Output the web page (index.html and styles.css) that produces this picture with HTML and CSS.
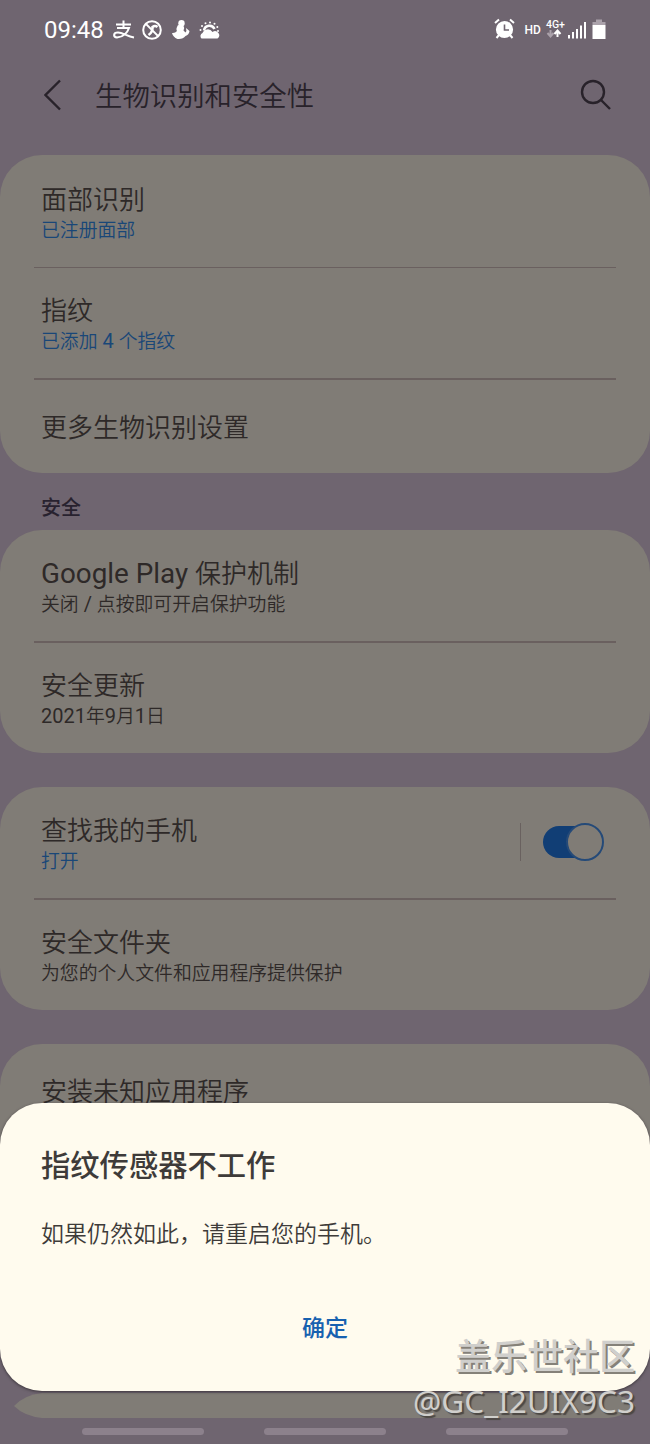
FILE: index.html
```html
<!DOCTYPE html>
<html lang="zh-CN">
<head>
<meta charset="utf-8">
<title>生物识别和安全性</title>
<link rel="stylesheet" href="styles.css">
</head>
<body>
<div class="phone">
  <div class="status">
    <span class="clock">09:48</span>
    <svg class="status-left" width="108" height="22" viewBox="0 0 108 22" fill="none" stroke="#fff" stroke-width="2">
      <path d="M3 5.500H18M10.500 1.500V9M4 9H16C14 15 9 18 4 18.500C0 18 0 13.500 5 13.500C10 13.500 14 17.500 21 18.500"/>
      <circle cx="39" cy="11" r="8.800"/>
      <path d="M33 5L45 17" stroke-width="1.800"/><path d="M35.500 16Q40 13 39.500 8Q42 6 44.500 8" stroke-width="2.600"/>
      <g fill="#fff" stroke="none"><circle cx="68.500" cy="4.300" r="3.200"/><path d="M65 6L70.500 7Q72 9 70.500 11.500L72.500 13.500Q74 12 73 9L76.500 12Q76 16 72.500 17Q70 20.500 64.500 20Q60 18 59 14Q62 14.500 64 12Q62.500 10 65 6Z"/></g>
      <path stroke-width="2.500" d="M91 11.500A5.500 5.500 0 0 1 101.500 10"/>
      <path fill="#fff" stroke="none" d="M88.500 19.500A3.300 3.300 0 0 1 89.500 14A5.600 5.600 0 0 1 99.500 13A3.700 3.700 0 0 1 104.500 19.500Z"/>
      <g fill="#fff" stroke="none"><circle cx="87.500" cy="11" r="1"/><circle cx="89" cy="7" r="1"/><circle cx="92.500" cy="4.300" r="1"/><circle cx="97" cy="3.500" r="1"/><circle cx="101.500" cy="4.800" r="1"/><circle cx="104.300" cy="8" r="1"/><circle cx="105" cy="12" r="1"/></g>
    </svg>
    <span class="spacer"></span>
    <svg class="status-right" width="114" height="24" viewBox="0 0 114 24">
      <g fill="#fff" stroke="#fff" stroke-width="2"><circle cx="10.500" cy="11.500" r="7.600"/><path fill="none" d="M1 5L5 1.500M16 1.500L20 5M5 17L2.500 20M16 17L18.500 20"/></g>
      <path d="M10.500 6.500V12H15" fill="none" stroke="#6f6570" stroke-width="1.600"/>
      <text x="30.500" y="15.500" class="hd">HD</text>
      <text x="52" y="10" class="net">4G+</text>
      <path d="M56.500 12V17M53.500 15L56.500 18.500L59.500 15" fill="none" stroke="#aaa1aa" stroke-width="2"/>
      <path d="M63.500 19V14M60.500 16L63.500 12.500L66.500 16" fill="none" stroke="#fff" stroke-width="2"/>
      <path d="M75 20.500V17M79 20.500V14M83 20.500V11M87 20.500V7.500M91 20.500V4" stroke="#fff" stroke-width="2"/>
      <path d="M98.500 7V4H102V1.500H108V4H111.500V7Z" fill="#aaa1aa"/><path d="M98.500 7H111.500V21H98.500Z" fill="#fff"/>
    </svg>
  </div>
  <header class="header">
    <svg class="back" width="20" height="32" viewBox="0 0 20 32"><path d="M16 1.500L1.500 16L16 30.500" fill="none" stroke="#28222a" stroke-width="2.400"/></svg>
    <h1>生物识别和安全性</h1>
    <svg class="search" width="32" height="32" viewBox="0 0 32 32"><g fill="none" stroke="#28222a" stroke-width="2.400"><circle cx="13" cy="13" r="11"/><path d="M21 21L30 30"/></g></svg>
  </header>
  <main>
    <section class="card">
      <div class="row"><div><h2>面部识别</h2><p class="blue">已注册面部</p></div></div>
      <div class="row"><div><h2>指纹</h2><p class="blue">已添加<span class="latin"> 4 </span>个指纹</p></div></div>
      <div class="row single"><h2>更多生物识别设置</h2></div>
    </section>
    <h3 class="label">安全</h3>
    <section class="card">
      <div class="row"><div><h2><span class="latin">Google Play </span>保护机制</h2><p>关闭<span class="latin"> / </span>点按即可开启保护功能</p></div></div>
      <div class="row"><div><h2>安全更新</h2><p><span class="latin">2021</span>年<span class="latin">9</span>月<span class="latin">1</span>日</p></div></div>
    </section>
    <section class="card gap">
      <div class="row"><div><h2>查找我的手机</h2><p class="blue">打开</p></div>
        <div class="control"><span class="track"><span class="knob"></span></span></div>
      </div>
      <div class="row"><div><h2>安全文件夹</h2><p>为您的个人文件和应用程序提供保护</p></div></div>
    </section>
    <section class="card gap last">
      <div class="row"><div><h2>安装未知应用程序</h2></div></div>
    </section>
  </main>
  <div class="bottom">
    <svg width="650" height="28" viewBox="0 0 650 28"><path d="M14 15Q24 4 42 2H608Q626 4 636 15Q626 25 608 27H42Q24 25 14 15Z" fill="#807c76"/></svg>
    <div class="nav"><i></i><i></i><i></i></div>
  </div>
  <div class="dialog">
    <h2>指纹传感器不工作</h2>
    <p>如果仍然如此，请重启您的手机。</p>
    <button>确定</button>
  </div>
  <div class="watermark"><span class="wm-name">盖乐世社区</span><span class="wm-user">@GC_I2UIX9C3</span></div>
</div>
</body>
</html>
```
FILE: styles.css
```css
* { box-sizing: border-box; }
body { margin: 0; font-family: Roboto, "Noto Sans CJK SC", sans-serif; }
h1, h2, h3, p { margin: 0; font-weight: 350; white-space: nowrap; }
svg { display: block; flex: none; }
.phone { position: relative; width: 650px; height: 1444px; overflow: hidden; background: #6f6570; display: flex; flex-direction: column; }
.status { height: 60px; padding: 0 42px 0 44px; display: flex; align-items: center; color: #fff; }
.clock { font-size: 24px; width: 69px; }
.spacer { flex: 1; }
.status-right { overflow: visible; }
.hd { font-size: 12px; font-weight: 500; fill: #fff; }
.net { font-size: 10.500px; font-weight: 500; fill: #fff; }
.header { height: 95px; padding: 0 38px 26px 44px; display: flex; align-items: center; color: #28222a; }
.header h1 { flex: 1; margin-left: 31px; padding-top: 5px; font-size: 27.400px; line-height: 40px; }
.card { background: #807c76; border-radius: 42px; overflow: hidden; }
.card + .gap { margin-top: 34px; }
.row { position: relative; height: 111.500px; padding: 27.500px 41px 0; display: flex; justify-content: space-between; color: #2e2928; }
.row + .row::before { content: ""; position: absolute; top: 0; left: 34px; right: 34px; height: 1.500px; background: #6a605f; }
.row h2 { font-size: 26px; line-height: 34px; }
.row p { font-size: 18.850px; line-height: 29px; }
.latin { font-size: 1.06em; font-weight: 400; line-height: 1; }
h2 .latin { font-size: 1.07em; }
.row .blue { color: #194778; }
.single { height: 94.500px; padding-top: 32.500px; }
.label { height: 57px; padding: 20.500px 41px 0; font-size: 20px; line-height: 30px; font-weight: 500; color: #28222f; }
.last { height: 150px; }
.last .row { padding-top: 31.500px; }
.control { width: 85px; height: 38px; margin: 9px 4px 0 0; padding-left: 22px; border-left: 1.500px solid #69615f; display: flex; align-items: center; }
.track { display: flex; flex: none; justify-content: flex-end; align-items: center; width: 61px; height: 32px; border-radius: 16px; background: linear-gradient(90deg, #113e75 44px, transparent 44px); }
.knob { width: 38px; height: 38px; flex: none; border-radius: 50%; background: #807c76; border: 2px solid #254a78; }
.bottom { position: absolute; left: 0; top: 1391px; width: 650px; height: 53px; background: #6f6570; }
.nav { display: flex; justify-content: center; gap: 60px; padding-top: 9px; }
.nav i { width: 122px; height: 7px; border-radius: 4px; background: #8c818c; }
.dialog { position: absolute; left: 0; top: 1103px; width: 650px; height: 288px; padding: 43px 41px 0; border-radius: 42px; background: #fffbee; box-shadow: 0 1px 3px #3b353b; color: #3e3b39; display: flex; flex-direction: column; }
.dialog h2 { font-size: 29.300px; line-height: 40px; font-weight: 500; }
.dialog p { margin-top: 30.500px; font-size: 23px; line-height: 36px; }
.dialog button { align-self: center; margin-top: 58.500px; padding: 0; border: 0; background: none; font: 500 23px/36px Roboto, "Noto Sans CJK SC", sans-serif; color: #1761b0; }
.watermark { position: absolute; right: 15px; top: 1330px; display: flex; flex-direction: column; align-items: flex-end; color: #d0cfcc; text-shadow: 2px 2px 1px #4c4844; white-space: nowrap; }
.wm-name { font: 500 36px/48px "Noto Sans CJK SC", sans-serif; text-shadow: 2px 2px 0 #858179; }
.wm-user { font: 400 31.500px/46px "Noto Sans", sans-serif; }
```
